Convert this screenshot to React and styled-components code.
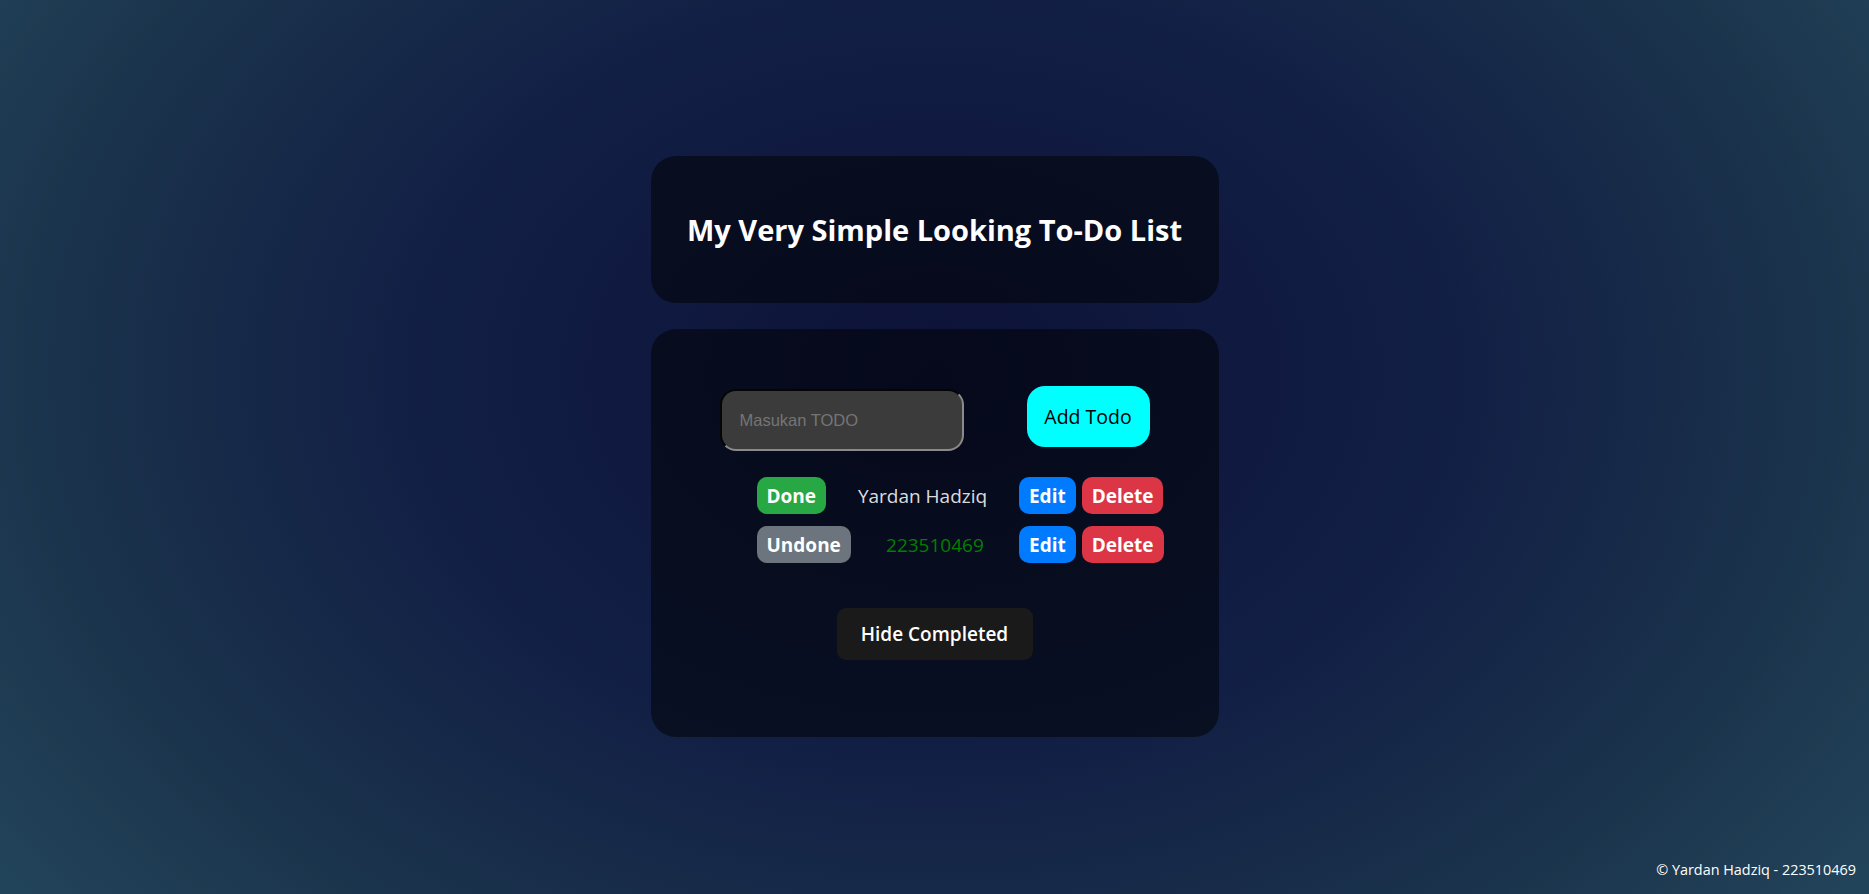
import styled, { createGlobalStyle } from "styled-components";

const GlobalStyle = createGlobalStyle`
  html, body {
    margin: 0;
    padding: 0;
  }
  body {
    min-height: 100vh;
    font-family: "Open Sans", "Noto Sans", sans-serif;
    color: rgba(255, 255, 255, 0.87);
    background: radial-gradient(
      ellipse 62% 95% at 50% 42%,
      #0d1238 0%,
      #121f45 45%,
      #1a324b 75%,
      #22445a 100%
    );
    background-attachment: fixed;
  }
`;

const StyledPage = styled.div`
  min-height: 100vh;
  display: flex;
  flex-direction: column;
`;

const StyledMain = styled.main`
  width: 568px;
  margin: 0 auto;
  padding-top: 156px;
  display: flex;
  flex-direction: column;
  gap: 26px;
`;

const StyledCard = styled.section`
  background-color: rgba(0, 0, 0, 0.5);
  border-radius: 25px;
  display: flex;
  flex-direction: column;
  align-items: center;
  box-sizing: border-box;
`;

const StyledHeaderCard = styled(StyledCard)`
  height: 147px;
  justify-content: center;

  h1 {
    margin: 0;
    color: #fff;
    font-size: 29px;
    font-weight: 700;
  }
`;

const StyledBodyCard = styled(StyledCard)`
  padding: 57px 0 77px;
`;

const StyledForm = styled.form`
  display: flex;
  align-items: flex-start;
  gap: 63px;
`;

const StyledInput = styled.input`
  width: 244px;
  height: 62px;
  margin-top: 3px;
  box-sizing: border-box;
  padding: 0 18px;
  border-radius: 16px;
  border: 2px inset #8a8a8a;
  border-top-color: #5a5a5a;
  border-left-color: #5a5a5a;
  background-color: #3b3b3b;
  color: #fff;
  font-family: "Liberation Sans", Arial, sans-serif;
  font-size: 16.5px;
  outline: none;

  &::placeholder {
    color: #757575;
  }
`;

const StyledAddButton = styled.button`
  width: 123px;
  height: 61px;
  padding: 0;
  border: none;
  border-radius: 18px;
  background-color: #00ffff;
  color: #000;
  font-family: inherit;
  font-size: 19.5px;
  font-weight: 500;
  cursor: pointer;
`;

const StyledList = styled.ul`
  list-style: none;
  width: 407px;
  margin: 26px 0 0;
  padding: 0 0 0 51px;
  display: flex;
  flex-direction: column;
  gap: 12px;
`;

const StyledRow = styled.li`
  display: flex;
  align-items: center;
  justify-content: space-between;
  height: 37px;
`;

const StyledActions = styled.div`
  display: flex;
  gap: 6px;
`;

const StyledPill = styled.button`
  height: 37px;
  padding: 0 10px;
  border: none;
  border-radius: 10px;
  background-color: ${({ $bg }) => $bg};
  color: #fff;
  font-family: inherit;
  font-size: 19px;
  font-weight: 700;
  cursor: pointer;
`;

const StyledText = styled.span`
  font-size: 19px;
  color: ${({ $done }) => ($done ? "rgba(255, 255, 255, 0.87)" : "#008000")};
`;

const StyledHideButton = styled.button`
  margin-top: 45px;
  width: 196px;
  height: 52px;
  padding: 0;
  border: 1px solid transparent;
  border-radius: 9px;
  background-color: #1a1a1a;
  color: #fff;
  font-family: inherit;
  font-size: 19px;
  font-weight: 600;
  cursor: pointer;
`;

const StyledFooter = styled.footer`
  margin-top: auto;
  align-self: flex-end;
  padding: 0 13px 15px 0;
  font-size: 14.4px;
  color: #fff;
`;

const todos = [
  { id: 1, text: "Yardan Hadziq", done: true },
  { id: 2, text: "223510469", done: false },
];

const App = () => {
  return (
    <StyledPage>
      <GlobalStyle />
      <StyledMain>
        <StyledHeaderCard>
          <h1>My Very Simple Looking To-Do List</h1>
        </StyledHeaderCard>
        <StyledBodyCard>
          <StyledForm onSubmit={(e) => e.preventDefault()}>
            <StyledInput type="text" placeholder="Masukan TODO" />
            <StyledAddButton type="submit">Add Todo</StyledAddButton>
          </StyledForm>
          <StyledList>
            {todos.map((todo) => (
              <StyledRow key={todo.id}>
                <StyledPill $bg={todo.done ? "#28a745" : "#6c757d"}>
                  {todo.done ? "Done" : "Undone"}
                </StyledPill>
                <StyledText $done={todo.done}>{todo.text}</StyledText>
                <StyledActions>
                  <StyledPill $bg="#007bff">Edit</StyledPill>
                  <StyledPill $bg="#dc3545">Delete</StyledPill>
                </StyledActions>
              </StyledRow>
            ))}
          </StyledList>
          <StyledHideButton>Hide Completed</StyledHideButton>
        </StyledBodyCard>
      </StyledMain>
      <StyledFooter>© Yardan Hadziq - 223510469</StyledFooter>
    </StyledPage>
  );
};

export default App;
